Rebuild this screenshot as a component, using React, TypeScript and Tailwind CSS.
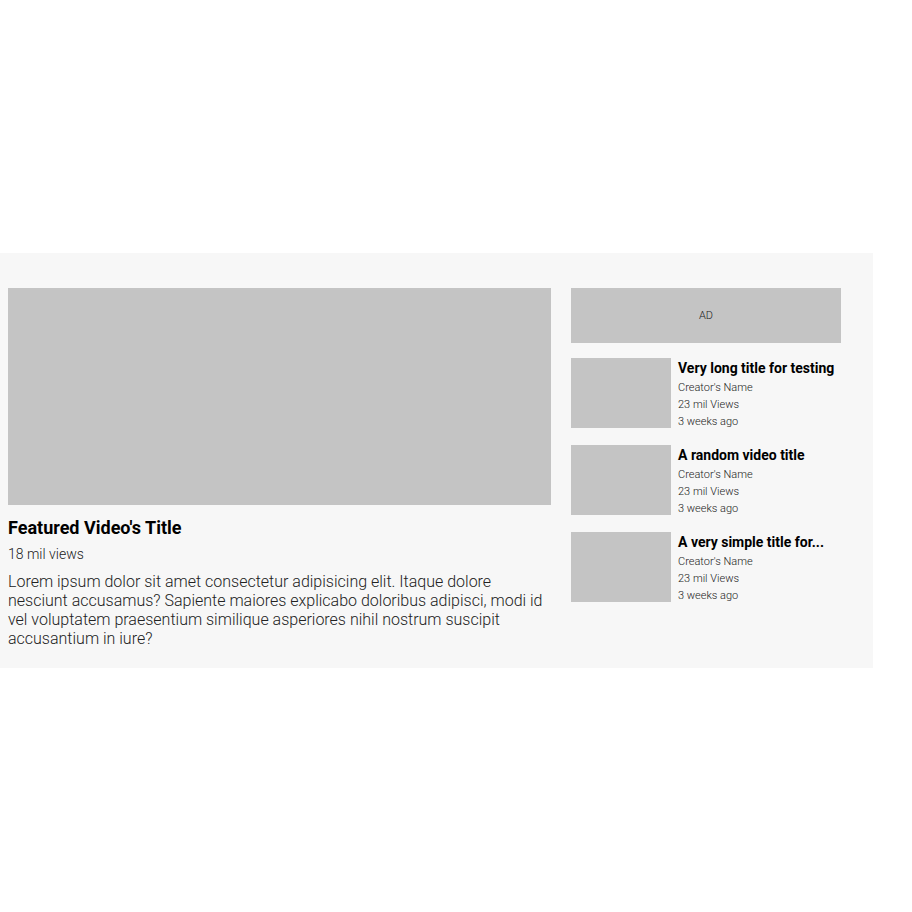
const videos = [
  { title: "Very long title for testing" },
  { title: "A random video title" },
  { title: "A very simple title for..." },
];

export default function App() {
  return (
    <div className="min-h-screen bg-white pt-[253px] font-['Roboto',sans-serif]">
      <div className="flex w-[873px] gap-5 bg-[#f7f7f7] pl-2 pt-[35px] pb-[20px]">
        <div className="w-[543px]">
          <div className="h-[217px] w-full bg-[#c4c4c4]" />
          <h1 className="mt-[12px] text-lg font-bold leading-[22px] text-black">Featured Video's Title</h1>
          <p className="mt-[5px] text-sm font-light leading-[20px] text-[#222]">18 mil views</p>
          <p className="mt-[8px] text-base font-light leading-[19px] text-[#222]">
            Lorem ipsum dolor sit amet consectetur adipisicing elit. Itaque dolore nesciunt accusamus? Sapiente maiores
            explicabo doloribus adipisci, modi id vel voluptatem praesentium similique asperiores nihil nostrum suscipit
            accusantium in iure?
          </p>
        </div>
        <div className="flex w-[270px] flex-col">
          <div className="flex h-[55px] items-center justify-center bg-[#c4c4c4] pt-px text-[11px] font-light text-[#222]">AD</div>
          <div className="mt-[15px] flex flex-col gap-[17px]">
            {videos.map((v) => (
              <div key={v.title} className="flex h-[70px] items-start gap-[7px]">
                <div className="h-[70px] w-[100px] shrink-0 bg-[#c4c4c4]" />
                <div className="flex flex-col pt-[2px]">
                  <h2 className="text-sm font-bold leading-[17px] text-black">{v.title}</h2>
                  <p className="mt-[2px] text-[11px] font-light leading-[17px] text-[#222]">Creator's Name</p>
                  <p className="text-[11px] font-light leading-[17px] text-[#222]">23 mil Views</p>
                  <p className="text-[11px] font-light leading-[17px] text-[#222]">3 weeks ago</p>
                </div>
              </div>
            ))}
          </div>
        </div>
      </div>
    </div>
  );
}
